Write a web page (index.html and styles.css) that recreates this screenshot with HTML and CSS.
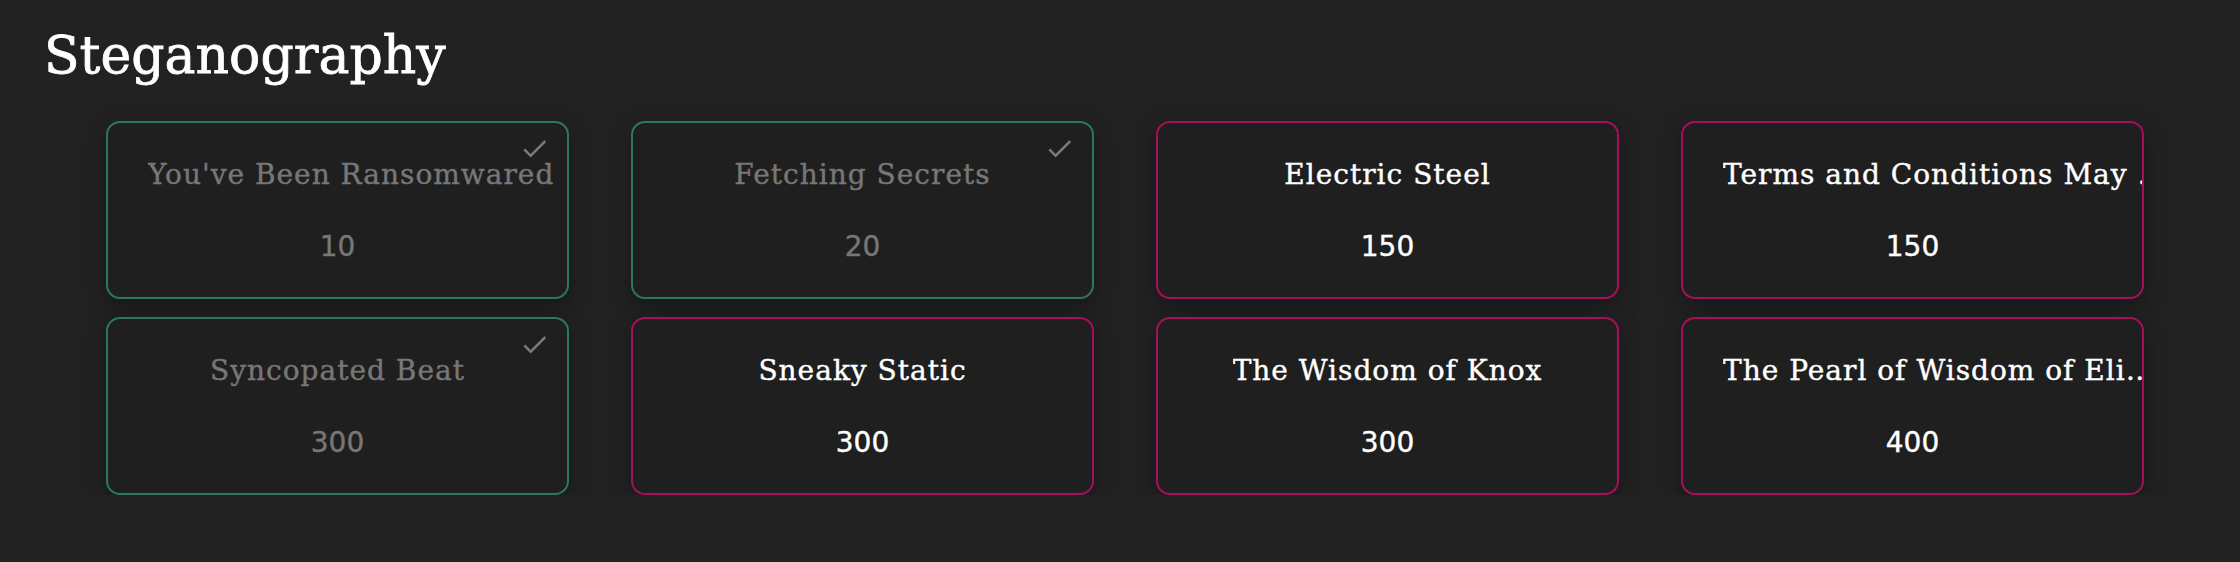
FILE: index.html
```html
<!DOCTYPE html>
<html lang="en">
<head>
<meta charset="utf-8">
<title>Steganography</title>
<link rel="stylesheet" href="styles.css">
</head>
<body>
<main class="page">
  <h1 class="category">Steganography</h1>
  <section class="grid">
    <div class="card solved">
      <svg class="check" viewBox="0 0 24 24"><path d="M9 16.17L4.83 12l-1.42 1.41L9 19 21 7l-1.41-1.41z"/></svg>
      <div class="name"><span>You've Been Ransomwared</span></div>
      <div class="points">10</div>
    </div>
    <div class="card solved">
      <svg class="check" viewBox="0 0 24 24"><path d="M9 16.17L4.83 12l-1.42 1.41L9 19 21 7l-1.41-1.41z"/></svg>
      <div class="name"><span>Fetching Secrets</span></div>
      <div class="points">20</div>
    </div>
    <div class="card">
      <div class="name"><span>Electric Steel</span></div>
      <div class="points">150</div>
    </div>
    <div class="card">
      <div class="name"><span>Terms and Conditions May Apply</span></div>
      <div class="points">150</div>
    </div>
    <div class="card solved">
      <svg class="check" viewBox="0 0 24 24"><path d="M9 16.17L4.83 12l-1.42 1.41L9 19 21 7l-1.41-1.41z"/></svg>
      <div class="name"><span>Syncopated Beat</span></div>
      <div class="points">300</div>
    </div>
    <div class="card">
      <div class="name"><span>Sneaky Static</span></div>
      <div class="points">300</div>
    </div>
    <div class="card">
      <div class="name"><span>The Wisdom of Knox</span></div>
      <div class="points">300</div>
    </div>
    <div class="card">
      <div class="name"><span>The Pearl of Wisdom of Eliphas Levi</span></div>
      <div class="points">400</div>
    </div>
  </section>
</main>
</body>
</html>
```

FILE: styles.css
```css
html, body {
  margin: 0;
  padding: 0;
  background: #222222;
}

.page {
  padding: 24px 0 0 0;
}

.category {
  margin: 0 0 35px 44px;
  font-family: "DejaVu Serif", "Liberation Serif", serif;
  font-weight: normal;
  font-size: 52px;
  line-height: 62px;
  color: #ffffff;
  -webkit-text-stroke: 0.8px #ffffff;
}

.grid {
  display: grid;
  grid-template-columns: repeat(4, 463px);
  column-gap: 62px;
  row-gap: 18px;
  padding-left: 106px;
}

.card {
  position: relative;
  box-sizing: border-box;
  height: 178px;
  border: 2px solid #a80f5a;
  border-radius: 14px;
  background: #1f1f1f;
  box-shadow: 0 6px 22px rgba(0, 0, 0, 0.35);
  overflow: hidden;
  padding: 34px 0 32px 0;
  display: flex;
  flex-direction: column;
  gap: 36px;
  color: #ffffff;
}

.card.solved {
  border-color: #2a7a57;
  color: #777777;
}

.check {
  position: absolute;
  top: 10px;
  right: 17px;
  width: 31px;
  height: 31px;
  fill: #7a7a7a;
}

.name {
  padding: 0 40px;
  text-align: center;
  white-space: nowrap;
  font-family: "DejaVu Serif", "Liberation Serif", serif;
  font-size: 28px;
  line-height: 36px;
  letter-spacing: 1px;
  -webkit-text-stroke: 0.4px currentColor;
}

.name span {
  display: inline-block;
  vertical-align: top;
  max-width: calc(100% + 66px);
  overflow: hidden;
  text-overflow: ellipsis;
}

.points {
  text-align: center;
  font-family: "DejaVu Sans", "Liberation Sans", sans-serif;
  font-size: 28px;
  line-height: 36px;
  -webkit-text-stroke: 0.4px currentColor;
}
```
